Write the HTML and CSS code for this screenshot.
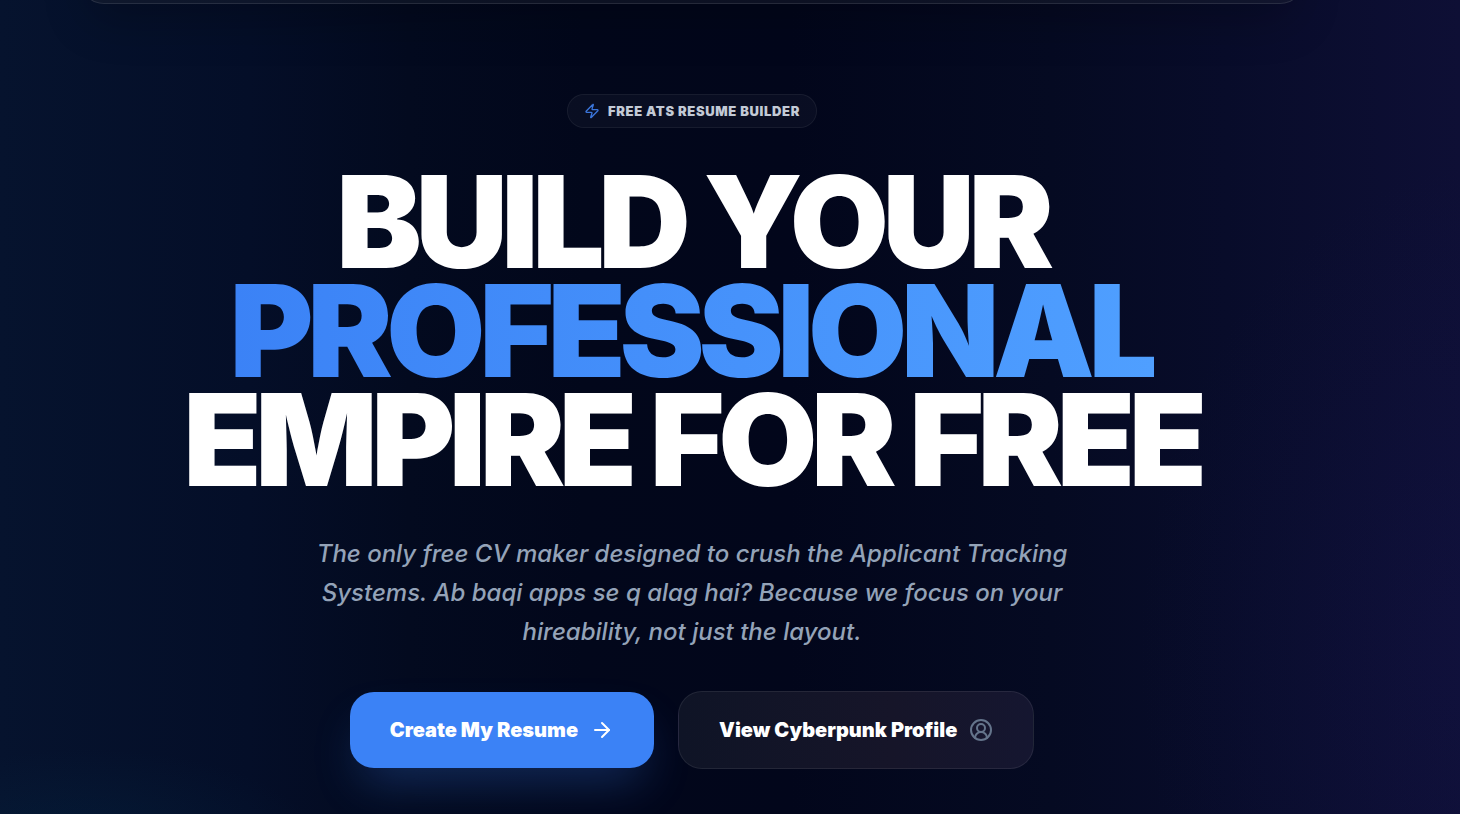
FILE: index.html
```html
<!DOCTYPE html>
<html lang="en">
<head>
<meta charset="utf-8">
<meta name="viewport" content="width=device-width, initial-scale=1">
<title>Free ATS Resume Builder</title>
<link rel="stylesheet" href="styles.css">
</head>
<body>
<div class="page">
  <header class="navbar"></header>
  <main class="hero">
    <div class="badge">
      <svg class="badge-icon" viewBox="0 0 24 24" aria-hidden="true"><path d="M4 14a1 1 0 0 1-.78-1.63l9.9-10.2a.5.5 0 0 1 .86.46l-1.92 6.02A1 1 0 0 0 13 10h7a1 1 0 0 1 .78 1.63l-9.9 10.2a.5.5 0 0 1-.86-.46l1.92-6.02A1 1 0 0 0 11 14z"/></svg>
      <span>Free ATS Resume Builder</span>
    </div>
    <h1 class="title">
      <span class="title-line">Build Your</span>
      <span class="title-line title-accent">Professional</span>
      <span class="title-line">Empire For Free</span>
    </h1>
    <p class="lead">The only free CV maker designed to crush the Applicant Tracking Systems. Ab baqi apps se q alag hai? Because we focus on your hireability, not just the layout.</p>
    <div class="actions">
      <button class="btn btn-primary" type="button">
        <span>Create My Resume</span>
        <svg class="btn-icon" viewBox="0 0 24 24" aria-hidden="true"><path d="M5 12h14"/><path d="m12 5 7 7-7 7"/></svg>
      </button>
      <button class="btn btn-glass" type="button">
        <span>View Cyberpunk Profile</span>
        <svg class="btn-icon btn-icon-muted" viewBox="0 0 24 24" aria-hidden="true"><path d="M18 20a6 6 0 0 0-12 0"/><circle cx="12" cy="10" r="4"/><circle cx="12" cy="12" r="10"/></svg>
      </button>
    </div>
  </main>
</div>
</body>
</html>
```
FILE: styles.css
```css
*,
*::before,
*::after {
  box-sizing: border-box;
}

body {
  margin: 0;
  font-family: Inter, "Liberation Sans", sans-serif;
  color: #ffffff;
  background-color: #020617;
}

svg {
  fill: none;
  stroke: currentColor;
  stroke-width: 2;
  stroke-linecap: round;
  stroke-linejoin: round;
}

.page {
  min-height: 100vh;
  padding-right: 76px;
  overflow: hidden;
  background-color: #020617;
  background-image:
    radial-gradient(ellipse 16% 12% at 6% 104%, rgba(0, 60, 90, 0.2), transparent),
    radial-gradient(ellipse 24% 60% at 102% 80%, rgba(22, 22, 80, 0.25), transparent),
    linear-gradient(90deg, #06132e 0%, #040e28 17%, #030a1f 28%, #02071b 40%, #02061b 54%, #050a22 72%, #080c2a 84%, #0e0f35 100%);
}

.navbar {
  height: 80px;
  margin: -76px 80px 0;
  border: 1px solid rgba(255, 255, 255, 0.1);
  border-radius: 24px;
  background-color: rgba(30, 34, 48, 0.4);
  box-shadow: 0 24px 48px -12px rgba(0, 0, 0, 0.25);
}

.hero {
  display: flex;
  flex-direction: column;
  align-items: center;
  padding: 90px 24px 45px;
  text-align: center;
}

.badge {
  display: flex;
  align-items: center;
  gap: 8px;
  padding: 8px 16px;
  border: 1px solid rgba(255, 255, 255, 0.06);
  border-radius: 17px;
  background-color: rgba(255, 255, 255, 0.03);
  color: #c3cad6;
  font-size: 13px;
  font-weight: 900;
  line-height: 16px;
  letter-spacing: 0.05em;
  text-transform: uppercase;
}

.badge-icon {
  width: 16px;
  height: 16px;
  color: #3b76dc;
}

.title {
  margin: 39px 0 0;
  font-size: 128px;
  font-weight: 900;
  line-height: 109px;
  letter-spacing: -0.05em;
  text-transform: uppercase;
}

.title-line {
  display: block;
  width: fit-content;
  margin: 0 auto;
  white-space: nowrap;
}

.title-accent {
  color: transparent;
  background-image: linear-gradient(90deg, #3b82f6, #4f9fff);
  background-clip: text;
  -webkit-background-clip: text;
}

.lead {
  max-width: 768px;
  margin: 40px 0 0;
  color: #94a3b8;
  font-size: 24px;
  font-style: italic;
  font-weight: 500;
  line-height: 39px;
}

.actions {
  display: flex;
  align-items: center;
  gap: 24px;
  margin-top: 40px;
}

.btn {
  display: flex;
  align-items: center;
  gap: 12px;
  padding: 24px 40px;
  border: 0;
  border-radius: 24px;
  color: #ffffff;
  font-family: inherit;
  font-size: 20px;
  font-weight: 900;
  line-height: 28px;
  cursor: pointer;
}

.btn-primary {
  background-color: #3b82f6;
  box-shadow: 0 24px 48px -12px rgba(59, 130, 246, 0.3);
}

.btn-glass {
  border: 1px solid rgba(255, 255, 255, 0.08);
  background-image: linear-gradient(90deg, #0f1426, #161529 60%, #151630);
}

.btn-icon {
  width: 24px;
  height: 24px;
}

.btn-icon-muted {
  color: #64748b;
}
```
